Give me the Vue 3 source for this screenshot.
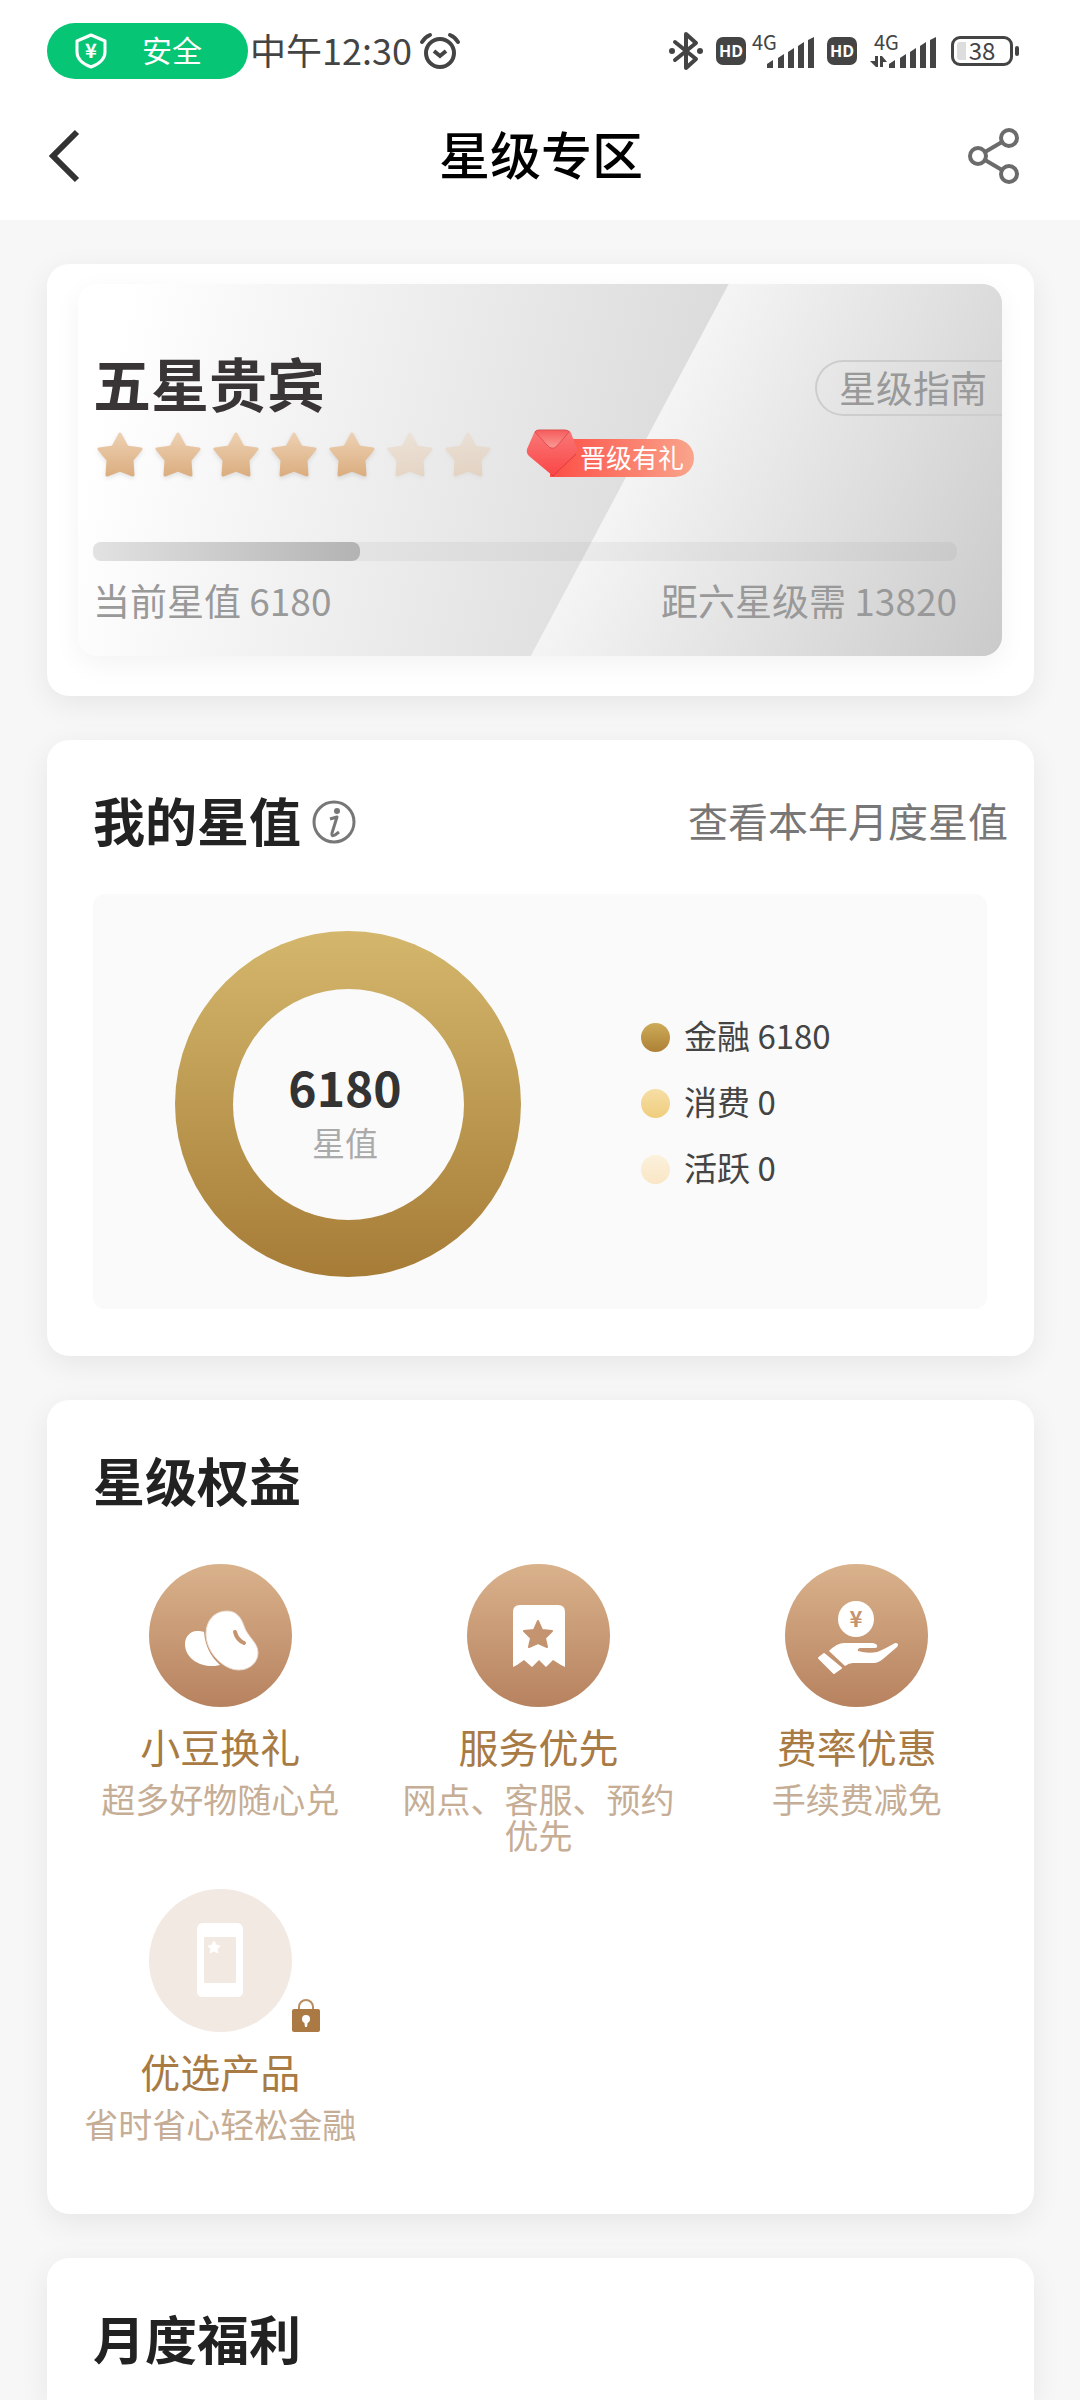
<script setup>
const stars = [true, true, true, true, true, false, false]

const currentValue = 6180
const remaining = 13820
const progress = (currentValue / (currentValue + remaining)) * 100

const legend = [
  { name: '金融', value: 6180, tone: 'gold' },
  { name: '消费', value: 0, tone: 'amber' },
  { name: '活跃', value: 0, tone: 'cream' },
]

const benefits = [
  { icon: 'bean', title: '小豆换礼', desc: '超多好物随心兑' },
  { icon: 'ticket', title: '服务优先', desc: '网点、客服、预约优先' },
  { icon: 'hand', title: '费率优惠', desc: '手续费减免' },
  { icon: 'phone', title: '优选产品', desc: '省时省心轻松金融', locked: true },
]
</script>

<template>
  <div class="page">
    <header class="top">
      <div class="status">
        <div class="safe">
          <svg width="34" height="36" viewBox="0 0 34 36">
            <path d="M17 2 L31 8 V19 C31 26 25 31 17 34 C9 31 3 26 3 19 V8 Z" fill="none" stroke="#fff" stroke-width="3" stroke-linejoin="round" />
            <text x="17" y="25" text-anchor="middle" font-size="20" font-weight="700" fill="#fff">¥</text>
          </svg>
          <span>安全</span>
        </div>
        <time class="clock">中午12:30</time>
        <svg class="alarm" width="40" height="38" viewBox="0 0 40 38">
          <circle cx="20" cy="21" r="14" fill="none" stroke="#444" stroke-width="4" />
          <path d="M14 19 L20 24 L26 19" fill="none" stroke="#444" stroke-width="4" />
          <path d="M2 10 Q5 5 10 3 M30 3 Q35 5 38 10" fill="none" stroke="#444" stroke-width="4" stroke-linecap="round" />
        </svg>
        <div class="signals">
          <svg width="36" height="40" viewBox="0 0 36 40">
            <path d="M7 11 L28 28 L18 37 V3 L28 12 L7 29" fill="none" stroke="#444" stroke-width="4" stroke-linejoin="round" stroke-linecap="round" />
            <circle cx="4" cy="20" r="3" fill="#444" />
            <circle cx="32" cy="20" r="3" fill="#444" />
          </svg>
          <span class="hd">HD</span>
          <svg class="cell" width="66" height="36" viewBox="0 0 66 36">
            <text x="1" y="17" font-size="20" fill="#444">4G</text>
            <path d="M16 35 V31 L22 27 V35Z M27 35 V25 L33 21 V35Z M37 35 V19 L43 15 V35Z M47 35 V13 L53 9 V35Z M57 35 V7 L63 4 V35Z" fill="#444" />
          </svg>
          <span class="hd">HD</span>
          <svg class="cell" width="66" height="36" viewBox="0 0 66 36">
            <text x="1" y="17" font-size="20" fill="#444">4G</text>
            <path d="M16 35 V31 L22 27 V35Z M27 35 V25 L33 21 V35Z M37 35 V19 L43 15 V35Z M47 35 V13 L53 9 V35Z M57 35 V7 L63 4 V35Z" fill="#444" />
            <path d="M2 23 H5 V34 H3 L-3 28 H2Z M7 34 V23 H9 L14 29 H10 V34Z" fill="#444" />
          </svg>
          <span class="battery">38</span>
        </div>
      </div>
      <nav class="nav">
        <button class="icon-btn" aria-label="返回">
          <svg width="32" height="50" viewBox="0 0 32 50">
            <path d="M29 1 L5 25 L29 49" fill="none" stroke="#333" stroke-width="6" />
          </svg>
        </button>
        <h1>星级专区</h1>
        <button class="icon-btn" aria-label="分享">
          <svg width="52" height="58" viewBox="0 0 52 58">
            <g fill="none" stroke="#6b6b6b" stroke-width="4">
              <circle cx="10" cy="29" r="8" />
              <circle cx="41" cy="11" r="8" />
              <circle cx="41" cy="47" r="8" />
              <path d="M17 25 L34 15 M17 33 L34 43" />
            </g>
          </svg>
        </button>
      </nav>
    </header>

    <main class="cards">
      <section class="card level-card">
        <div class="level">
          <div class="level-head">
            <div>
              <h2 class="level-name">五星贵宾</h2>
              <div class="star-row">
                <svg v-for="(on, i) in stars" :key="i" class="star" :class="{ off: !on }" width="48" height="50" viewBox="0 0 48 50">
                  <defs>
                    <linearGradient :id="'star' + i" x1="0" y1="0" x2="0" y2="1">
                      <stop offset="0" stop-color="#edd0b2" />
                      <stop offset="1" stop-color="#dbae80" />
                    </linearGradient>
                  </defs>
                  <path d="M24 5 L31 18 L45 20 L36 31 L37 46 L24 41 L11 46 L12 31 L3 20 L17 18 Z" :fill="`url(#star${i})`" :stroke="`url(#star${i})`" stroke-width="3" stroke-linejoin="round" />
                </svg>
                <a class="gift" href="#">
                  <svg width="52" height="48" viewBox="0 0 52 48">
                    <defs>
                      <linearGradient id="env" x1="0" y1="0" x2="0" y2="1">
                        <stop offset="0" stop-color="#f97878" />
                        <stop offset="1" stop-color="#fb4646" />
                      </linearGradient>
                      <linearGradient id="flap" x1="0" y1="0" x2="0" y2="1">
                        <stop offset="0" stop-color="#f45c5c" />
                        <stop offset="1" stop-color="#fc9a94" />
                      </linearGradient>
                    </defs>
                    <path d="M12 1 H40 Q44 1 45 4 L51 20 Q51 24 49 26 L27 47 L3 27 Q0 24 1 20 L8 4 Q9 1 12 1Z" fill="url(#env)" />
                    <path d="M50 25 L27 47 L25 45" fill="none" stroke="#d93c3c" stroke-width="1" />
                    <path d="M9 3 Q10 1 13 1 H39 Q42 1 43 3 L31 17 Q26 22 21 16Z" fill="url(#flap)" stroke="#dd5050" stroke-width="1" />
                  </svg>
                  <span>晋级有礼</span>
                </a>
              </div>
            </div>
            <a class="guide" href="#">星级指南</a>
          </div>
          <div class="track" role="progressbar" aria-label="星值进度" :aria-valuenow="currentValue" aria-valuemin="0" :aria-valuemax="currentValue + remaining">
            <div class="fill" :style="{ width: progress + '%' }"></div>
          </div>
          <div class="level-foot">
            <span>当前星值 {{ currentValue }}</span>
            <span>距六星级需 {{ remaining }}</span>
          </div>
        </div>
      </section>

      <section class="card value-card">
        <div class="card-head">
          <h2>我的星值</h2>
          <button class="icon-btn info" aria-label="星值说明">
            <svg width="44" height="44" viewBox="0 0 44 44">
              <circle cx="22" cy="22" r="20" fill="none" stroke="#777" stroke-width="3" />
              <circle cx="25" cy="11" r="3" fill="#777" />
              <path d="M18 19 L25 17 L20 33 Q19 37 23 35 L27 32" fill="none" stroke="#777" stroke-width="3" stroke-linejoin="round" />
            </svg>
          </button>
          <a class="more" href="#">查看本年月度星值</a>
        </div>
        <div class="chart">
          <div class="donut">
            <div class="hole">
              <strong>{{ currentValue }}</strong>
              <span>星值</span>
            </div>
          </div>
          <ul class="legend">
            <li v-for="item in legend" :key="item.name">
              <i :class="item.tone"></i>
              <span>{{ item.name }} {{ item.value }}</span>
            </li>
          </ul>
        </div>
      </section>

      <section class="card benefit-card">
        <div class="card-head"><h2>星级权益</h2></div>
        <div class="grid">
          <a v-for="b in benefits" :key="b.icon" class="benefit" href="#">
            <span class="badge" :class="{ dim: b.locked }">
              <svg v-if="b.icon === 'bean'" viewBox="0 0 143 143">
                <path d="M48 67 C41 67 36 73 36 80 C36 94 50 103 66 102 L71 101 C62 93 56 82 55 68 C53 67 51 67 48 67Z" fill="#fff" />
                <path d="M78 47 C65 47 57 57 57 70 C57 88 74 106 90 106 C101 106 109 98 109 89 C109 78 99 74 95 62 C92 53 87 47 78 47Z" fill="#fff" stroke="#eadbcf" stroke-width="1" />
                <path d="M86 68 Q88 76 95 79" fill="none" stroke="#c4936f" stroke-width="4" stroke-linecap="round" />
              </svg>
              <svg v-else-if="b.icon === 'ticket'" viewBox="0 0 143 143">
                <path d="M46 103 V48 Q46 41 53 41 H91 Q98 41 98 48 V103 L94 101 L86 96 L79 103 L72 96 L65 103 L57 96 L50 101Z" fill="#fff" />
                <path d="M71 57 L75 66 L85 67 L78 74 L80 83 L71 79 L62 83 L64 74 L57 67 L67 66Z" fill="#c4936f" stroke="#c4936f" stroke-width="2" stroke-linejoin="round" />
              </svg>
              <svg v-else-if="b.icon === 'hand'" viewBox="0 0 143 143">
                <circle cx="71" cy="55" r="18" fill="#fff" />
                <text x="71" y="63" text-anchor="middle" font-size="22" font-weight="700" fill="#c4936f">¥</text>
                <path d="M34 94 L39 90 L56 104 L49 109Z" fill="#fff" stroke="#fff" stroke-width="2" stroke-linejoin="round" />
                <path d="M44 87 Q52 79 59 79 H88 Q93 80 92 83 Q92 84 88 84 H75 Q72 85 73 87 Q83 90 92 88 Q96 87 110 79 Q115 79 112 83 L98 95 Q93 99 89 99 H68 Q64 99 60 102Z" fill="#fff" />
              </svg>
              <svg v-else viewBox="0 0 143 143">
                <path fill-rule="evenodd" d="M54 34 H88 Q94 34 94 41 V102 Q94 108 88 108 H54 Q48 108 48 102 V41 Q48 34 54 34Z M55 48 V94 H87 V48Z" fill="#fff" />
                <path d="M65 52 L67 56 L71 57 L68 60 L69 64 L65 62 L61 64 L62 60 L59 57 L63 56Z" fill="#fff" stroke="#fff" />
              </svg>
              <svg v-if="b.locked" class="lock" width="28" height="34" viewBox="0 0 28 34">
                <path d="M7 13 V9 A7 7 0 0 1 21 9 V13" fill="none" stroke="#b98d60" stroke-width="2" />
                <rect y="11" width="28" height="23" rx="2" fill="#ab7a44" />
                <circle cx="14" cy="21" r="4" fill="#fff" />
                <path d="M12 22 H16 L15 29 H13Z" fill="#fff" />
              </svg>
            </span>
            <span class="name">{{ b.title }}</span>
            <span class="desc">{{ b.desc }}</span>
          </a>
        </div>
      </section>

      <section class="card last-card">
        <div class="card-head"><h2>月度福利</h2></div>
      </section>
    </main>
  </div>
</template>

<style>
body {
  margin: 0;
  background: #f7f7f7;
}
</style>

<style scoped>
.page {
  display: flex;
  flex-direction: column;
  min-height: 100vh;
  font-family: "Noto Sans CJK SC", "Noto Sans", sans-serif;
  color: #222;
}
h1, h2, ul {
  margin: 0;
  padding: 0;
}
a {
  color: inherit;
  text-decoration: none;
}
svg {
  display: block;
  flex: none;
  overflow: visible;
}
.icon-btn {
  display: block;
  padding: 0;
  border: 0;
  background: none;
}
.top {
  background: #fff;
}
.status {
  display: flex;
  align-items: center;
  height: 102px;
  padding: 0 67px 0 47px;
  color: #444;
}
.safe {
  display: flex;
  align-items: center;
  gap: 34px;
  box-sizing: border-box;
  width: 201px;
  height: 56px;
  padding-left: 27px;
  border-radius: 28px;
  background: #06c575;
  color: #fff;
  font-size: 30px;
  line-height: 52px;
}
.safe span {
  padding-bottom: 4px;
}
.clock {
  margin: 0 8px 4px 2px;
  font-size: 36px;
  line-height: 52px;
}
.signals {
  display: flex;
  align-items: center;
  margin-left: auto;
}
.hd {
  width: 30px;
  height: 28px;
  margin: 0 5px 0 12px;
  border-radius: 7px;
  background: #444;
  color: #fff;
  font: 700 16px/28px "Open Sans", sans-serif;
  text-align: center;
}
.cell + .hd {
  margin: 0 16px 0 10px;
}
.battery {
  position: relative;
  box-sizing: border-box;
  width: 62px;
  height: 30px;
  margin-left: 12px;
  border: 3px solid #444;
  border-radius: 9px;
  background: linear-gradient(90deg, #ddd 12px, #fff 12px);
  background-clip: content-box;
  padding: 3px;
  font-size: 24px;
  line-height: 16px;
  text-align: center;
}
.battery::after {
  content: "";
  position: absolute;
  top: 7px;
  right: -9px;
  width: 4px;
  height: 10px;
  border-radius: 2px;
  background: #444;
}
.nav {
  display: flex;
  align-items: center;
  justify-content: space-between;
  height: 108px;
  padding: 0 60px 10px 48px;
}
h1 {
  padding: 0 0 6px 34px;
  font-size: 51px;
  line-height: 72px;
  font-weight: 500;
  color: #000;
}
.cards {
  display: flex;
  flex: 1;
  flex-direction: column;
  gap: 44px;
  padding: 44px 46px 0 47px;
}
.card {
  border-radius: 22px;
  background: #fff;
  box-shadow: 0 8px 30px rgba(0, 0, 0, 0.07);
}
.level-card {
  padding: 20px 32px 40px 31px;
}
.level {
  position: relative;
  overflow: hidden;
  box-sizing: border-box;
  height: 372px;
  padding: 62px 0 0 15px;
  border-radius: 20px;
  background: linear-gradient(104deg, #fff 5%, #d9d9d9 68%);
  box-shadow: 0 8px 28px rgba(0, 0, 0, 0.05);
  color: #999;
}
.level::before {
  content: "";
  position: absolute;
  top: 0;
  right: 0;
  bottom: 0;
  width: 51%;
  background: linear-gradient(118deg, #f4f4f4 30%, #cacaca 100%);
  clip-path: polygon(42% 0, 100% 0, 100% 100%, 0 100%);
}
.level-head,
.level-foot,
.track {
  position: relative;
}
.level-head {
  display: flex;
  justify-content: space-between;
}
.level-name {
  font-size: 58px;
  line-height: 72px;
  color: #393536;
}
.star-row {
  display: flex;
  align-items: flex-start;
  gap: 10px;
  padding: 11px 0 0 3px;
}
.star {
  filter: drop-shadow(0 2px 2px rgba(0, 0, 0, 0.1));
}
.star.off {
  opacity: 0.35;
}
.gift {
  display: flex;
  align-items: flex-end;
  margin-left: 24px;
}
.gift svg {
  position: relative;
}
.gift span {
  margin-left: -28px;
  padding: 0 10px 2px 30px;
  border-radius: 0 20px 20px 0;
  background: linear-gradient(90deg, #fd4e45, #f9a58c);
  color: #fff;
  font-size: 26px;
  line-height: 36px;
}
.guide {
  align-self: flex-start;
  box-sizing: border-box;
  height: 56px;
  margin-top: 14px;
  padding: 0 15px 0 22px;
  border: 2px solid #cdcdcd;
  border-right: 0;
  border-radius: 28px 0 0 28px;
  font-size: 37px;
  line-height: 50px;
}
.track {
  height: 19px;
  margin: 63px 45px 0 0;
  border-radius: 8px;
  background: rgba(0, 0, 0, 0.04);
}
.fill {
  height: 100%;
  border-radius: 8px;
  background: linear-gradient(90deg, #e2e2e2, #b3b3b3);
}
.level-foot {
  display: flex;
  justify-content: space-between;
  margin: 12px 45px 0 0;
  font-size: 37px;
  line-height: 54px;
}
.card-head {
  display: flex;
  align-items: center;
  padding: 41px 26px 0 46px;
}
.card-head h2 {
  font-size: 52px;
  line-height: 78px;
}
.info {
  margin: 4px 0 0 11px;
}
.more {
  margin-left: auto;
  font-size: 40px;
  line-height: 60px;
  color: #777;
}
.value-card {
  padding-bottom: 47px;
}
.chart {
  display: flex;
  align-items: center;
  margin: 35px 47px 0 46px;
  padding: 37px 20px 32px 82px;
  border-radius: 12px;
  background: #fafafa;
}
.donut {
  display: flex;
  flex: none;
  align-items: center;
  justify-content: center;
  width: 346px;
  height: 346px;
  border-radius: 50%;
  background: linear-gradient(#d4b76c, #a67c37);
}
.hole {
  display: flex;
  flex-direction: column;
  align-items: center;
  justify-content: center;
  box-sizing: border-box;
  width: 231px;
  height: 231px;
  padding: 12px 6px 0 0;
  border-radius: 50%;
  background: #fafafa;
}
.hole strong {
  font-size: 48px;
  line-height: 64px;
  color: #333;
}
.hole span {
  font-size: 33px;
  line-height: 48px;
  color: #aaa;
}
.legend {
  display: flex;
  flex-direction: column;
  margin-left: 120px;
  padding-bottom: 2px;
  list-style: none;
  font-size: 33px;
  line-height: 62px;
  color: #444;
}
.legend li {
  display: flex;
  align-items: center;
}
.legend span {
  padding-bottom: 4px;
}
.legend i {
  width: 29px;
  height: 29px;
  margin-right: 14px;
  border-radius: 50%;
}
.gold {
  background: linear-gradient(#ccab59, #ae8136);
}
.amber {
  background: linear-gradient(#f7dea6, #efcd7d);
}
.cream {
  background: linear-gradient(#fcf1dc, #f9e6c6);
}
.grid {
  display: grid;
  grid-template-columns: repeat(3, 1fr);
  row-gap: 36px;
  padding: 45px 18px 72px 14px;
}
.benefit {
  display: flex;
  flex-direction: column;
  align-items: center;
}
.badge {
  position: relative;
  width: 143px;
  height: 143px;
  border-radius: 50%;
  background: linear-gradient(#d9b28c, #b7825f);
}
.badge.dim {
  background: #f2e9e3;
}
.lock {
  position: absolute;
  right: -28px;
  bottom: 0;
}
.name {
  margin-top: 9px;
  font-size: 40px;
  line-height: 60px;
  color: #a87a44;
}
.desc {
  max-width: 284px;
  margin-top: 5px;
  font-size: 34px;
  line-height: 36px;
  text-align: center;
  color: #c6ad95;
}
.last-card {
  flex: 1;
  border-radius: 22px 22px 0 0;
}
</style>
